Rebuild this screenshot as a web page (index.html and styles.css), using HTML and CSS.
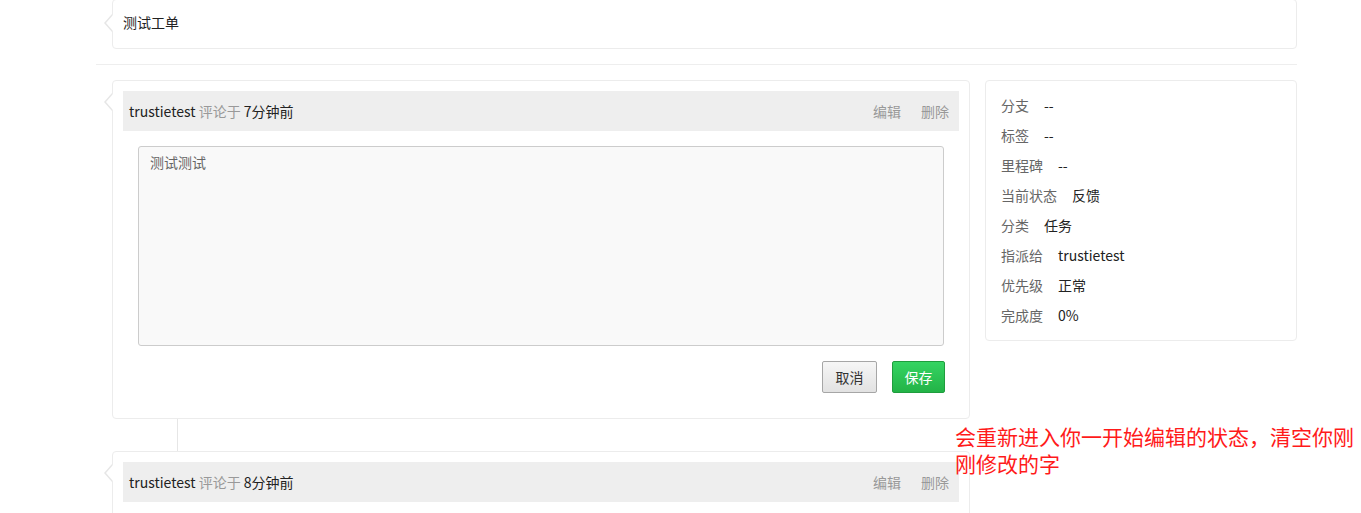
FILE: index.html
```html
<!DOCTYPE html>
<html lang="zh-CN">
<head>
<meta charset="utf-8">
<title>测试工单</title>
<link rel="stylesheet" href="styles.css">
</head>
<body>
<div class="page">
  <div class="title-card notched">测试工单</div>
  <div class="divider"></div>
  <div class="main">
    <div class="comments">
      <div class="comment notched">
        <div class="comment-head">
          <div class="who"><span class="user">trustietest</span> <span class="muted">评论于</span> <span class="time">7分钟前</span></div>
          <div class="actions"><span>编辑</span><span>删除</span></div>
        </div>
        <div class="editor">测试测试</div>
        <div class="buttons">
          <button class="btn btn-cancel">取消</button>
          <button class="btn btn-save">保存</button>
        </div>
      </div>
      <div class="timeline-line"></div>
      <div class="comment notched comment-last">
        <div class="comment-head">
          <div class="who"><span class="user">trustietest</span> <span class="muted">评论于</span> <span class="time">8分钟前</span></div>
          <div class="actions"><span>编辑</span><span>删除</span></div>
        </div>
      </div>
    </div>
    <div class="side">
      <div class="row"><span class="label">分支</span><span class="value">--</span></div>
      <div class="row"><span class="label">标签</span><span class="value">--</span></div>
      <div class="row"><span class="label">里程碑</span><span class="value">--</span></div>
      <div class="row"><span class="label">当前状态</span><span class="value">反馈</span></div>
      <div class="row"><span class="label">分类</span><span class="value">任务</span></div>
      <div class="row"><span class="label">指派给</span><span class="value">trustietest</span></div>
      <div class="row"><span class="label">优先级</span><span class="value">正常</span></div>
      <div class="row"><span class="label">完成度</span><span class="value">0%</span></div>
    </div>
  </div>
</div>
<div class="annotation">会重新进入你一开始编辑的状态，清空你刚刚修改的字</div>
</body>
</html>
```

FILE: styles.css
```css
html, body {
  margin: 0;
  padding: 0;
  background: #fff;
}
body {
  font-family: "Noto Sans CJK SC", "Microsoft YaHei", sans-serif;
  font-size: 14px;
  color: #333;
  overflow: hidden;
  height: 513px;
}
.page {
  width: 1201px;
  margin-left: 96px;
}
.notched {
  position: relative;
}
.notched::before,
.notched::after {
  content: "";
  position: absolute;
  width: 0;
  height: 0;
  border-style: solid;
}
.notched::before {
  left: -9px;
  top: 12px;
  border-width: 9px 8px 9px 0;
  border-color: transparent #e6e6e6 transparent transparent;
}
.notched::after {
  left: -7px;
  top: 13px;
  border-width: 8px 7px 8px 0;
  border-color: transparent #fff transparent transparent;
}
.title-card {
  margin-left: 16px;
  margin-top: -1px;
  height: 50px;
  border: 1px solid #ececec;
  border-radius: 4px;
  box-sizing: border-box;
  padding: 0 10px 4px 10px;
  display: flex;
  align-items: center;
  color: #222;
  line-height: 20px;
}
.title-card::before { top: 14px; }
.title-card::after { top: 15px; }
.divider {
  height: 1px;
  background: #eeeeee;
  margin-top: 15px;
  margin-bottom: 15px;
}
.main {
  display: flex;
  gap: 15px;
  padding-left: 16px;
}
.comments {
  width: 858px;
  flex: none;
  display: flex;
  flex-direction: column;
}
.comment {
  border: 1px solid #ececec;
  border-radius: 4px;
  padding: 10px;
  background: #fff;
}
.comment-head {
  height: 40px;
  background: #eeeeee;
  display: flex;
  align-items: center;
  justify-content: space-between;
  padding: 0 10px 0 6px;
  line-height: 20px;
}
.user, .time {
  color: #222;
}
.muted {
  color: #999;
}
.actions {
  display: flex;
  gap: 20px;
  color: #999;
}
.editor {
  margin: 15px 15px 0 15px;
  height: 200px;
  box-sizing: border-box;
  border: 1px solid #cccccc;
  border-radius: 3px;
  background: #f9f9f9;
  padding: 5px 11px;
  line-height: 20px;
  color: #666;
}
.buttons {
  display: flex;
  justify-content: flex-end;
  gap: 15px;
  margin: 15px 14px 15px 0;
}
.btn {
  font-family: "Noto Sans CJK SC", sans-serif;
  font-size: 14px;
  height: 32px;
  box-sizing: border-box;
  border-radius: 2px;
  padding: 0;
  line-height: 20px;
  cursor: pointer;
}
.btn-cancel {
  width: 55px;
  border: 1px solid #a6a6a6;
  background: linear-gradient(#f6f6f6, #e2e2e2);
  color: #333;
}
.btn-save {
  width: 53px;
  border: 1px solid #1f9d3d;
  background: linear-gradient(#35d462, #23b347);
  color: #fff;
}
.timeline-line {
  width: 1px;
  height: 32px;
  background: #e6e6e6;
  margin-left: 65px;
}
.comment-last {
  height: 200px;
}
.side {
  width: 312px;
  flex: none;
  box-sizing: border-box;
  border: 1px solid #ececec;
  border-radius: 4px;
  padding: 9px 15px 10px 15px;
  align-self: flex-start;
}
.row {
  height: 30px;
  line-height: 30px;
  display: flex;
}
.label {
  color: #666;
  margin-right: 15px;
}
.value {
  color: #222;
}
.annotation {
  position: absolute;
  left: 955px;
  top: 423px;
  width: 402px;
  font-size: 21px;
  line-height: 27px;
  color: #ff1a1a;
}
```
